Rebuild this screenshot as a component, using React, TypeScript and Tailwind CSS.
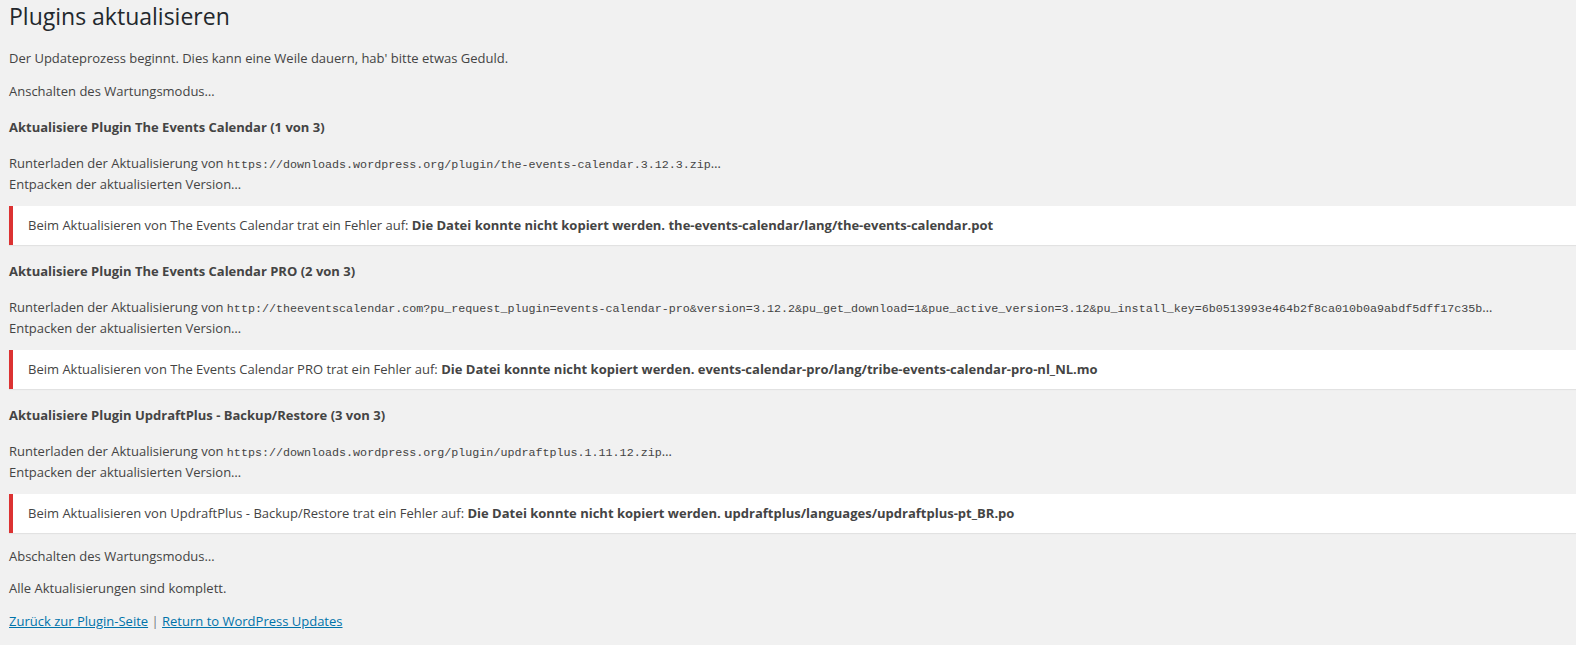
const plugins = [
  {
    name: "The Events Calendar",
    step: "1 von 3",
    url: "https://downloads.wordpress.org/plugin/the-events-calendar.3.12.3.zip",
    file: "the-events-calendar/lang/the-events-calendar.pot",
  },
  {
    name: "The Events Calendar PRO",
    step: "2 von 3",
    url: "http://theeventscalendar.com?pu_request_plugin=events-calendar-pro&version=3.12.2&pu_get_download=1&pue_active_version=3.12&pu_install_key=6b0513993e464b2f8ca010b0a9abdf5dff17c35b",
    file: "events-calendar-pro/lang/tribe-events-calendar-pro-nl_NL.mo",
  },
  {
    name: "UpdraftPlus - Backup/Restore",
    step: "3 von 3",
    url: "https://downloads.wordpress.org/plugin/updraftplus.1.11.12.zip",
    file: "updraftplus/languages/updraftplus-pt_BR.po",
  },
];

export default function App() {
  return (
    <div
      className="min-h-[645px] bg-[#f1f1f1] pl-[9px] text-[13px] text-[#444]"
      style={{ fontFamily: '"Open Sans", "Noto Sans", sans-serif' }}
    >
      <h1 className="h-[32px] pt-[2px] text-[23px] leading-[29px] font-normal text-[#23282d]">Plugins aktualisieren</h1>
      <p className="mt-[16px] h-[20px] leading-[20px]">
        Der Updateprozess beginnt. Dies kann eine Weile dauern, hab' bitte etwas Geduld.
      </p>
      <p className="mt-[13px] h-[20px] leading-[20px]">Anschalten des Wartungsmodus…</p>

      {plugins.map((p, i) => (
        <div key={p.name} className={i === 0 ? "mt-[16px]" : "mt-[16px]"}>
          <h2 className="h-[20px] font-bold leading-[20px]">
            Aktualisiere Plugin {p.name} ({p.step})
          </h2>
          <div className="mt-[16px] leading-[20px]">
            <div className="h-[21px] overflow-hidden whitespace-nowrap">
              Runterladen der Aktualisierung von{" "}
              <code
                className="align-baseline text-[11.7px] leading-none"
                style={{ fontFamily: '"Liberation Mono", monospace' }}
              >
                {p.url}
              </code>
              …
            </div>
            <div className="h-[20px]">Entpacken der aktualisierten Version…</div>
          </div>
          <div className="mt-[12px] flex h-[39px] items-center border-l-4 border-[#dc3232] bg-white pl-[15px] shadow-[0_1px_1px_rgba(0,0,0,0.06)]">
            <p>
              Beim Aktualisieren von {p.name} trat ein Fehler auf:{" "}
              <strong className="font-bold">Die Datei konnte nicht kopiert werden. {p.file}</strong>
            </p>
          </div>
        </div>
      ))}

      <p className="mt-[13px] h-[20px] leading-[20px]">Abschalten des Wartungsmodus…</p>
      <p className="mt-[12px] h-[20px] leading-[20px]">Alle Aktualisierungen sind komplett.</p>
      <p className="mt-[13px] h-[20px] leading-[20px]">
        <a href="#" className="text-[#0073aa] underline">
          Zurück zur Plugin-Seite
        </a>{" "}
        <span className="text-[#72777c]">|</span>{" "}
        <a href="#" className="text-[#0073aa] underline">
          Return to WordPress Updates
        </a>
      </p>
    </div>
  );
}
